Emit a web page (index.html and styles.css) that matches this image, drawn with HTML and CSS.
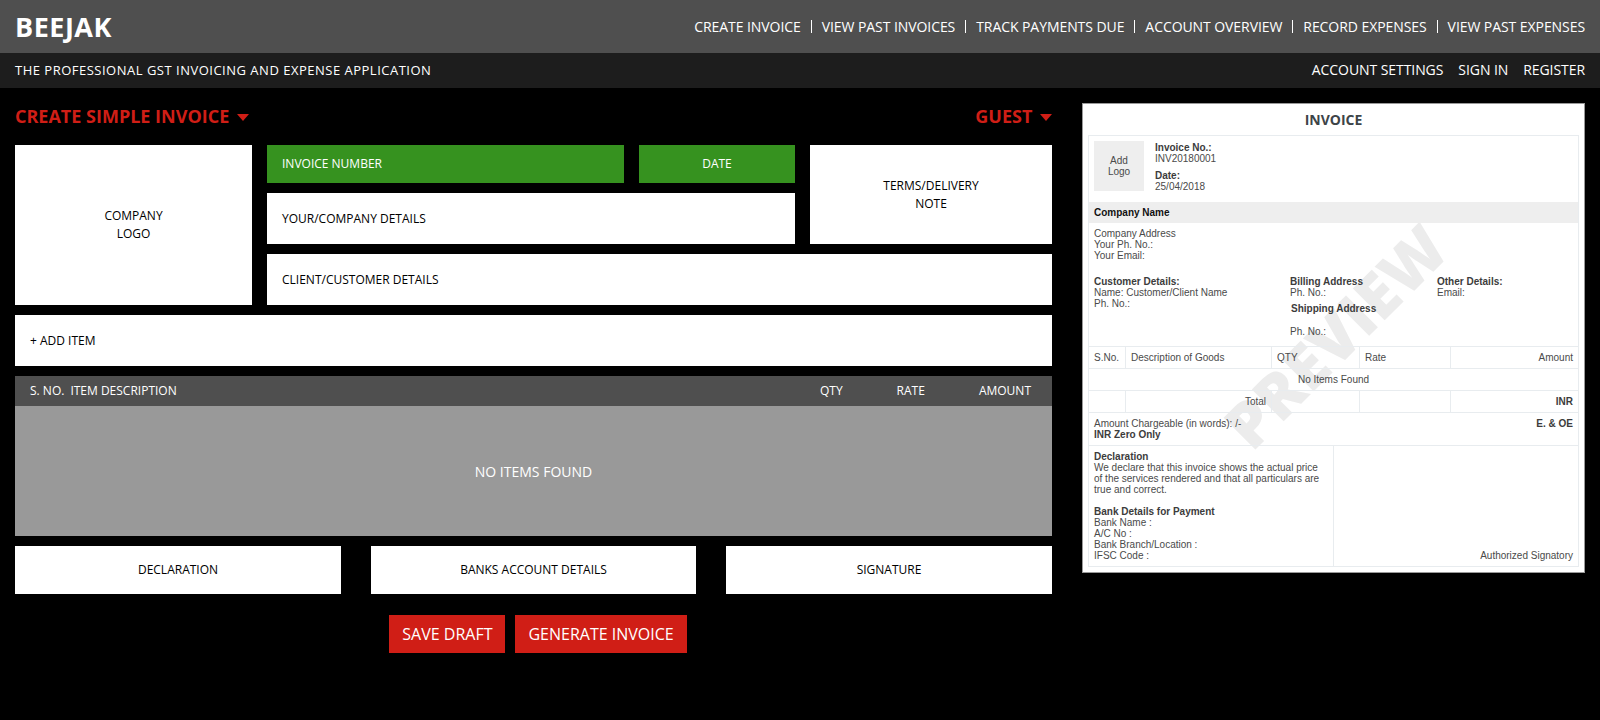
FILE: index.html
```html
<!DOCTYPE html>
<html lang="en">
<head>
    <meta charset="UTF-8">
    <title>Beejak - Create Simple Invoice</title>
    <link rel="stylesheet" href="styles.css">
</head>
<body>
    <header class="top-bar">
        <div class="logo">BEEJAK</div>
        <nav class="main-nav">
            <a href="#">CREATE INVOICE</a>
            <a href="#">VIEW PAST INVOICES</a>
            <a href="#">TRACK PAYMENTS DUE</a>
            <a href="#">ACCOUNT OVERVIEW</a>
            <a href="#">RECORD EXPENSES</a>
            <a href="#">VIEW PAST EXPENSES</a>
        </nav>
    </header>
    <div class="sub-bar">
        <div class="tagline">THE PROFESSIONAL GST INVOICING AND EXPENSE APPLICATION</div>
        <nav class="user-nav">
            <a href="#">ACCOUNT SETTINGS</a>
            <a href="#">SIGN IN</a>
            <a href="#">REGISTER</a>
        </nav>
    </div>

    <main class="page">
        <section class="editor">
            <div class="editor-head">
                <div class="drop-title">CREATE SIMPLE INVOICE <span class="caret"></span></div>
                <div class="drop-title">GUEST <span class="caret"></span></div>
            </div>

            <div class="top-grid">
                <div class="box box-center logo-box">COMPANY<br>LOGO</div>
                <div class="box green-box inv-number">INVOICE NUMBER</div>
                <div class="box green-box box-center inv-date">DATE</div>
                <div class="box box-center terms-box">TERMS/DELIVERY<br>NOTE</div>
                <div class="box your-details">YOUR/COMPANY DETAILS</div>
                <div class="box client-details">CLIENT/CUSTOMER DETAILS</div>
            </div>

            <div class="box add-item">+ ADD ITEM</div>

            <div class="items-head">
                <span class="col-sno">S. NO.</span>
                <span class="col-desc">ITEM DESCRIPTION</span>
                <span class="col-qty">QTY</span>
                <span class="col-rate">RATE</span>
                <span class="col-amount">AMOUNT</span>
            </div>
            <div class="items-body">NO ITEMS FOUND</div>

            <div class="bottom-row">
                <div class="box box-center">DECLARATION</div>
                <div class="box box-center">BANKS ACCOUNT DETAILS</div>
                <div class="box box-center">SIGNATURE</div>
            </div>

            <div class="actions">
                <button type="button">SAVE DRAFT</button>
                <button type="button">GENERATE INVOICE</button>
            </div>
        </section>

        <aside class="preview">
            <h2>INVOICE</h2>
            <div class="sheet">
                <div class="watermark">PREVIEW</div>

                <div class="sheet-top">
                    <div class="add-logo">Add<br>Logo</div>
                    <div class="inv-meta">
                        <p><b>Invoice No.:</b><br>INV20180001</p>
                        <p><b>Date:</b><br>25/04/2018</p>
                    </div>
                </div>

                <div class="company-name">Company Name</div>
                <div class="company-info">Company Address<br>Your Ph. No.:<br>Your Email:</div>

                <div class="parties">
                    <div class="party-customer"><b>Customer Details:</b><br>Name: Customer/Client Name<br>Ph. No.:</div>
                    <div class="party-billing">
                        <b>Billing Address</b><br>Ph. No.:
                        <div class="shipping"><b>Shipping Address</b></div>
                        <div class="shipping-ph">Ph. No.:</div>
                    </div>
                    <div class="party-other"><b>Other Details:</b><br>Email:</div>
                </div>

                <div class="sheet-row">
                    <div class="c1">S.No.</div>
                    <div class="c2">Description of Goods</div>
                    <div class="c3">QTY</div>
                    <div class="c4">Rate</div>
                    <div class="c5">Amount</div>
                </div>
                <div class="sheet-row no-items">No Items Found</div>
                <div class="sheet-row">
                    <div class="c1"></div>
                    <div class="c2 total-label">Total</div>
                    <div class="c3"></div>
                    <div class="c4"></div>
                    <div class="c5"><b>INR</b></div>
                </div>

                <div class="words">
                    <div>Amount Chargeable (in words): /-<br><b>INR Zero Only</b></div>
                    <b>E. &amp; OE</b>
                </div>

                <div class="sheet-foot">
                    <div class="foot-left">
                        <b>Declaration</b><br>
                        We declare that this invoice shows the actual price of the services rendered and that all particulars are true and correct.
                        <div class="bank"><b>Bank Details for Payment</b><br>Bank Name :<br>A/C No :<br>Bank Branch/Location :<br>IFSC Code :</div>
                    </div>
                    <div class="foot-right">Authorized Signatory</div>
                </div>
            </div>
        </aside>
    </main>
</body>
</html>
```

FILE: styles.css
```css
* {
    box-sizing: border-box;
}

body {
    margin: 0;
    background-color: #000;
    font-family: "Open Sans", sans-serif;
    font-size: 12px;
    color: #000;
}

a {
    color: #fff;
    text-decoration: none;
}

.top-bar {
    height: 53px;
    background-color: #4f4f4f;
    display: flex;
    justify-content: space-between;
    align-items: center;
    padding: 0 15px;
}

.logo {
    font-size: 27px;
    font-weight: 700;
    color: #fff;
    letter-spacing: 0.5px;
}

.main-nav {
    display: flex;
    font-size: 14px;
    letter-spacing: -0.07px;
}

.main-nav a {
    padding: 0 10px;
    line-height: 13px;
    border-left: 1px solid #fff;
}

.main-nav a:first-child {
    border-left: none;
}

.main-nav a:last-child {
    padding-right: 0;
}

.sub-bar {
    height: 35px;
    background-color: #1d1d1d;
    display: flex;
    justify-content: space-between;
    align-items: center;
    padding: 0 15px 2px;
    color: #fff;
}

.tagline {
    font-size: 13px;
    letter-spacing: 0.5px;
}

.user-nav {
    display: flex;
    gap: 15px;
    font-size: 14px;
    letter-spacing: -0.07px;
}

.page {
    display: flex;
    padding: 15px 15px 0;
    gap: 30px;
}

.editor {
    width: 1037px;
}

.editor-head {
    display: flex;
    justify-content: space-between;
    align-items: center;
    height: 27px;
    padding-bottom: 2px;
    margin-bottom: 15px;
}

.drop-title {
    font-size: 18px;
    font-weight: 700;
    color: #d01e16;
}

.caret {
    display: inline-block;
    width: 0;
    height: 0;
    margin-left: 3px;
    vertical-align: middle;
    border-left: 6px solid transparent;
    border-right: 6px solid transparent;
    border-top: 7px solid #d01e16;
}

.box {
    background-color: #fff;
    display: flex;
    align-items: center;
    padding: 0 15px;
}

.box-center {
    justify-content: center;
    text-align: center;
    line-height: 18px;
}

.green-box {
    background-color: #36921f;
    color: #fff;
    padding-bottom: 2px;
}

.inv-date {
    padding-bottom: 0;
}

.top-grid {
    display: grid;
    grid-template-columns: 237px 357px 156px 242px;
    grid-template-rows: 38px 51px 51px;
    gap: 10px 15px;
}

.logo-box {
    grid-row: 1 / 4;
}

.terms-box {
    grid-column: 4;
    grid-row: 1 / 3;
}

.your-details {
    grid-column: 2 / 4;
}

.client-details {
    grid-column: 2 / 5;
}

.add-item {
    height: 51px;
    margin-top: 10px;
}

.items-head {
    height: 30px;
    margin-top: 10px;
    padding: 0 21px 2px 15px;
    background-color: #4f4f4f;
    color: #fff;
    display: flex;
    align-items: center;
}

.col-desc {
    margin-left: 6px;
    flex: 1;
}

.col-rate {
    margin-left: 54px;
}

.col-amount {
    margin-left: 54px;
}

.items-body {
    height: 130px;
    background-color: #999;
    color: #fff;
    font-size: 14px;
    display: flex;
    align-items: center;
    justify-content: center;
}

.bottom-row {
    display: grid;
    grid-template-columns: 326px 325px 326px;
    gap: 30px;
    height: 48px;
    margin-top: 10px;
}

.actions {
    display: flex;
    justify-content: center;
    gap: 10px;
    margin-top: 21px;
    padding-left: 9px;
}

.actions button {
    height: 38px;
    padding: 0 13px;
    border: none;
    background-color: #d01e16;
    color: #fff;
    font-family: "Open Sans", sans-serif;
    font-size: 16px;
}

.preview {
    width: 503px;
    height: 470px;
    background-color: #fff;
    border: 1px solid #999;
    padding: 0 5px 5px;
    font-family: "Liberation Sans", Arial, sans-serif;
    font-size: 10px;
    line-height: 11px;
    color: #4a4a4a;
}

.preview b {
    color: #3c3c3c;
}

.preview h2 {
    margin: 0;
    height: 31px;
    font-family: "Open Sans", sans-serif;
    font-size: 14px;
    line-height: 31px;
    font-weight: 700;
    text-align: center;
    color: #3d4448;
}

.sheet {
    position: relative;
    height: 432px;
    border: 1px solid #e8ecef;
    overflow: hidden;
}

.watermark {
    position: absolute;
    left: 46px;
    top: 170px;
    width: 400px;
    text-align: center;
    transform: rotate(-45deg);
    font-family: "Open Sans", sans-serif;
    font-size: 63px;
    line-height: 60px;
    font-weight: 800;
    color: #ececec;
}

.sheet-top {
    position: relative;
    display: flex;
    height: 66px;
    padding: 5px;
}

.add-logo {
    width: 50px;
    height: 50px;
    background-color: #eee;
    text-align: center;
    padding-top: 14px;
}

.inv-meta {
    margin-left: 11px;
    padding-top: 1px;
}

.inv-meta p {
    margin: 0 0 6px;
}

.company-name {
    position: relative;
    height: 21px;
    padding: 0 5px;
    line-height: 21px;
    background-color: #eee;
    font-weight: 700;
    color: #111;
}

.company-info {
    position: relative;
    padding: 5px 5px 0;
    height: 52px;
}

.parties {
    position: relative;
    display: flex;
    height: 72px;
    padding: 1px 0 0 5px;
    border-bottom: 1px solid #e8ecef;
}

.party-customer {
    width: 196px;
}

.party-billing {
    width: 147px;
}

.shipping {
    margin-top: 5px;
    padding-left: 1px;
}

.shipping-ph {
    margin-top: 12px;
}

.sheet-row {
    position: relative;
    display: flex;
    height: 22px;
    line-height: 21px;
    border-bottom: 1px solid #e8ecef;
}

.sheet-row > div {
    padding: 0 5px;
    border-right: 1px solid #e8ecef;
}

.sheet-row > div:last-child {
    border-right: none;
}

.c1 {
    width: 37px;
}

.c2 {
    width: 146px;
}

.c3 {
    width: 88px;
}

.c4 {
    width: 91px;
}

.c5 {
    flex: 1;
    text-align: right;
}

.total-label {
    text-align: right;
}

.no-items {
    justify-content: center;
}

.words {
    position: relative;
    display: flex;
    justify-content: space-between;
    height: 33px;
    padding: 5px 5px 0;
    border-bottom: 1px solid #e8ecef;
}

.sheet-foot {
    position: relative;
    display: flex;
    height: 120px;
}

.foot-left {
    width: 245px;
    padding: 5px 6px 5px 5px;
    border-right: 1px solid #e8ecef;
}

.bank {
    margin-top: 11px;
}

.foot-right {
    flex: 1;
    display: flex;
    align-items: flex-end;
    justify-content: flex-end;
    padding: 5px;
}
```
